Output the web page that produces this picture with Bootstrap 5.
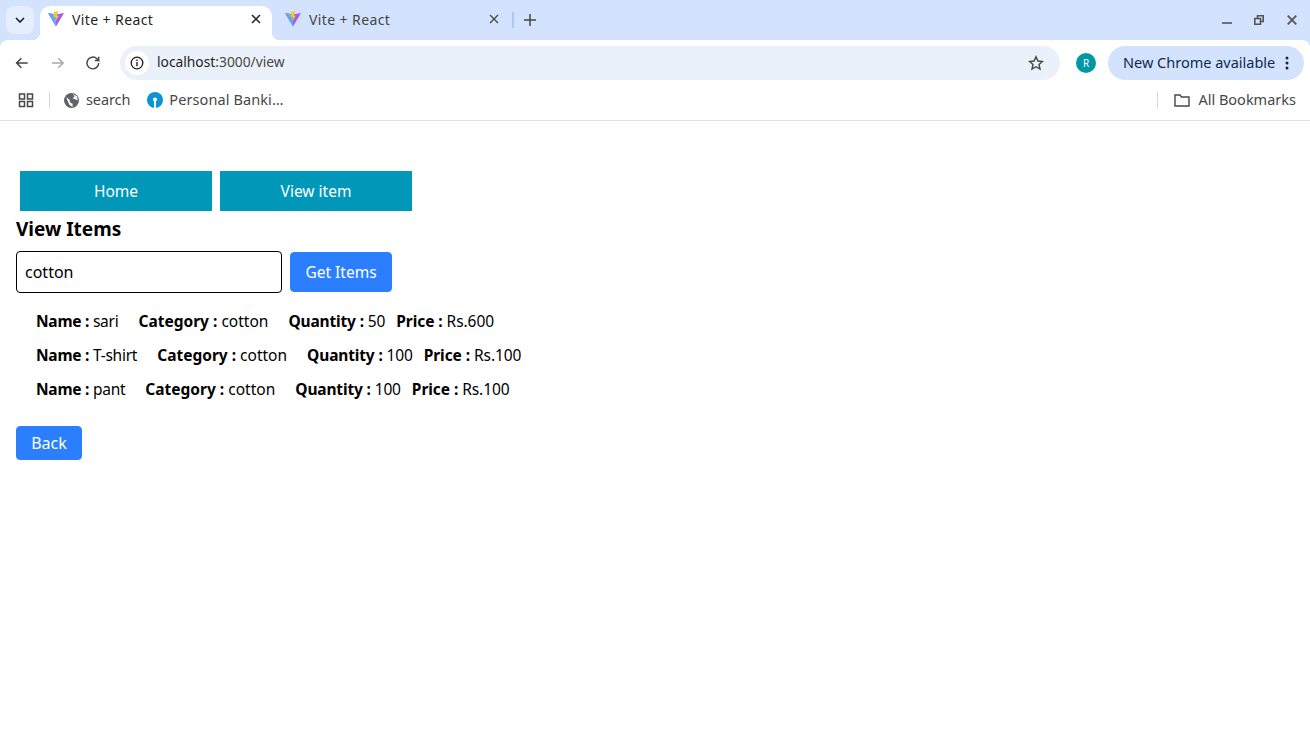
<!DOCTYPE html>
<html lang="en"><head><meta charset="utf-8"><title>Vite + React</title>
<link rel="stylesheet" href="https://cdn.jsdelivr.net/npm/bootstrap@5.3.0/dist/css/bootstrap.min.css">
<style>
html,body{height:741px;overflow:hidden}
body{font-family:"Noto Sans","Open Sans",sans-serif;color:#000;background:#fff}
.tabstrip{height:40px;background:#d3e3fd;color:#1f1f1f;font-size:14px;letter-spacing:.4px}
.tab-menu{width:28px;height:28px;margin:6px 6px;background:#e5eefd;border-radius:8px}
.tabx{width:232px;height:34px;margin-top:6px;padding:0 11px 8px 8px;gap:8px}
.tab-on{background:#fff;border-radius:10px 10px 0 0;position:relative}
.tab-on::before,.tab-on::after{content:"";position:absolute;bottom:0;width:8px;height:8px}
.tab-on::before{left:-8px;background:radial-gradient(circle at 0 0,#d3e3fd 8px,#fff 8.500px)}
.tab-on::after{right:-8px;background:radial-gradient(circle at 100% 0,#d3e3fd 8px,#fff 8.500px)}
.tab-off{color:#444746;width:240px;padding-left:13px;padding-right:13px}
.tab-name{flex:1 1 auto;white-space:nowrap}
.tab-sep{width:1.500px;height:16px;background:#a8c7fa;margin:12px 10px 0 0}
.plus-ic{margin-top:8px}
.winbtns{gap:22px;margin-right:13px;height:40px}
.win-r{margin-right:1px}
.toolbar-wrap{background:#d3e3fd}
.toolbar{height:40px;background:#fff;border-radius:8px 8px 0 0;padding:6px 6px 0 14px}
.navicons{gap:20px;width:87px}
.omni{height:34px;width:940px;background:#ebf1fa;border-radius:17px;margin-left:19px;padding:0 16px 0 5px;font-size:13.800px;color:#1f1f1f}
.omni-i{width:24px;height:24px;background:#fff;border-radius:50%;margin-right:8px}
.omni-url{flex:1 1 auto;padding-bottom:2px}
.omni-url span{color:#474747}
.avatar{width:20px;height:20px;border-radius:50%;background:#0097a7;color:#fff;font-size:10px;margin:0 12px 0 16px}
.chip{height:34px;width:196px;background:#d3e3fd;border-radius:17px;font-size:14.500px;color:#0f2a52;padding:0 15px 0 15px;white-space:nowrap}
.bookbar{height:41px;background:#fff;border-bottom:1px solid #e0e0e0;font-size:14.500px;color:#474747;padding:0 14px 0 18px;white-space:nowrap}
.bk-sep{width:1px;height:16px;background:#c7d9f7}
.bk-sep1{margin-left:15px}
.bk-globe{margin-left:14px}
.bk-search{margin-left:7px;letter-spacing:-.1px}
.bk-sbi{margin-left:17px}
.bk-long{margin-left:6px;letter-spacing:.1px}
.viewpage{padding:50px 16px 0}
.navlink-x{width:192px;height:40px;background:#0097b9;color:#fff;border:0;border-radius:0;padding:1px 0 0;font-size:15.500px}
.navlink-x:hover{background:#0097b9;color:#fff}
.navrow{margin-left:4px;gap:8px}
.view-h{font-size:19px;font-weight:700;line-height:24px;margin:6px 0 10px}
.search-in{width:266px;height:42px;border:1px solid #000;border-radius:4px;padding:0 8px;font-size:16px;color:#000}
.search-in:focus{border-color:#000;box-shadow:none}
.btn-x{background:#2b7fff;border-color:#2b7fff;color:#fff;border-radius:4px}
.getbtn{width:102px;height:40px;padding:1px 0 0;margin-left:8px;font-size:15.500px;white-space:nowrap}
.itemlist{margin:11px 0 0;padding:0 0 0 20px;list-style:none}
.itemlist li{height:34px;line-height:34px;font-size:15.500px;white-space:nowrap}
.itemlist b{font-weight:700}
.fld{display:inline-block}
.fld-name{letter-spacing:-.25px}
.fld-gap{margin-left:16px}
.fld-qty{letter-spacing:-.15px}
.fld-price{margin-left:7px;letter-spacing:-.07px}
.backbtn{width:66px;height:34px;padding:0;margin-top:20px;font-size:16px}
</style></head>
<body>
<div class="tabstrip d-flex align-items-start">
  <div class="tab-menu d-flex align-items-center justify-content-center flex-shrink-0">
    <svg width="10" height="6" viewBox="0 0 10 6"><path d="M1 1l4 4 4-4" fill="none" stroke="#1f1f1f" stroke-width="1.600"/></svg>
  </div>
  <div class="tabx tab-on d-flex align-items-center flex-shrink-0">
    <svg width="16" height="16" viewBox="0 0 16 16"><path d="M0 2l8 1.400L16 2 8 15.500z" fill="#a259ff"/><path d="M0 2l8 13.500V3.400z" fill="#58a8ff"/><path d="M6 1l4-1-1 5 2-.5L7 11l1-5-2.300.500z" fill="#ffc517"/></svg>
    <span class="tab-name">Vite + React</span>
    <svg width="10" height="10" viewBox="0 0 10 10"><path d="M1 1l8 8M9 1l-8 8" stroke="#1f1f1f" stroke-width="1.500"/></svg>
  </div>
  <div class="tabx tab-off d-flex align-items-center flex-shrink-0">
    <svg width="16" height="16" viewBox="0 0 16 16"><path d="M0 2l8 1.400L16 2 8 15.500z" fill="#a259ff"/><path d="M0 2l8 13.500V3.400z" fill="#58a8ff"/><path d="M6 1l4-1-1 5 2-.5L7 11l1-5-2.300.500z" fill="#ffc517"/></svg>
    <span class="tab-name">Vite + React</span>
    <svg width="10" height="10" viewBox="0 0 10 10"><path d="M1 1l8 8M9 1l-8 8" stroke="#444746" stroke-width="1.300"/></svg>
  </div>
  <div class="tab-sep flex-shrink-0"></div>
  <svg class="plus-ic flex-shrink-0" width="12" height="24" viewBox="0 0 12 24"><path d="M6 6v12M0 12h12" stroke="#444746" stroke-width="1.500"/></svg>
  <div class="winbtns ms-auto d-flex align-items-center">
    <svg width="10" height="10" viewBox="0 0 10 10"><path d="M0 8h10" stroke="#555" stroke-width="1.600"/></svg>
    <svg class="win-r" width="10" height="10" viewBox="0 0 10 10"><path d="M.8 3.500h5.700v5.700H.8zM3.500 3.500V.8h5.700v5.700H6.500" fill="none" stroke="#555" stroke-width="1.600"/></svg>
    <svg width="10" height="10" viewBox="0 0 10 10"><path d="M.7.700l8.600 8.600M9.300.700L.7 9.300" stroke="#555" stroke-width="1.800"/></svg>
  </div>
</div>
<div class="toolbar-wrap">
<div class="toolbar d-flex align-items-center">
  <div class="navicons d-flex align-items-center flex-shrink-0">
    <svg width="16" height="16" viewBox="0 0 16 16"><path d="M14 8H3M7.500 3.200L2.700 8l4.800 4.800" fill="none" stroke="#444746" stroke-width="1.600"/></svg>
    <svg width="16" height="16" viewBox="0 0 16 16"><path d="M2 8h11M8.500 3.200L13.300 8l-4.800 4.800" fill="none" stroke="#a9abac" stroke-width="1.600"/></svg>
    <svg width="16" height="16" viewBox="0 0 16 16"><path d="M14 8a6 6 0 1 1-1.800-4.300L14 5.500V1.500M14 5.500h-4" fill="none" stroke="#444746" stroke-width="1.500"/></svg>
  </div>
  <div class="omni d-flex align-items-center flex-shrink-0">
    <div class="omni-i d-flex align-items-center justify-content-center flex-shrink-0">
      <svg width="14" height="14" viewBox="0 0 14 14"><circle cx="7" cy="7" r="5.800" fill="none" stroke="#1f1f1f" stroke-width="1.300"/><path d="M7 6v4.200M7 3.500v1.400" stroke="#1f1f1f" stroke-width="1.400"/></svg>
    </div>
    <div class="omni-url">localhost<span>:3000/view</span></div>
    <svg width="16" height="16" viewBox="0 0 16 16"><path d="M8 1.800l1.900 4.200 4.500.5-3.400 3 1 4.500L8 11.700 4 14l1-4.500-3.400-3 4.500-.5z" fill="none" stroke="#444746" stroke-width="1.400"/></svg>
  </div>
  <div class="avatar d-flex align-items-center justify-content-center flex-shrink-0">R</div>
  <div class="chip d-flex align-items-center justify-content-between flex-shrink-0">
    <span>New Chrome available</span>
    <svg width="4" height="14" viewBox="0 0 4 14"><circle cx="2" cy="2" r="1.500" fill="#0f2a52"/><circle cx="2" cy="7" r="1.500" fill="#0f2a52"/><circle cx="2" cy="12" r="1.500" fill="#0f2a52"/></svg>
  </div>
</div>
</div>
<div class="bookbar d-flex align-items-center">
  <svg class="flex-shrink-0" width="16" height="16" viewBox="0 0 16 16"><path d="M1.500 2h5v5h-5zM9.500 2h5v5h-5zM1.500 9.500h5v5h-5zM9.500 9.500h5v5h-5z" fill="none" stroke="#474747" stroke-width="1.500"/></svg>
  <div class="bk-sep bk-sep1"></div>
  <svg class="bk-globe" width="15" height="15" viewBox="0 0 14 14"><circle cx="7" cy="7" r="7" fill="#5f6368"/><path d="M2 4l3 2 1 3 2 1v3l-3-2zM8 1l2 2-2 2 3 1 2 1-1-4z" fill="#fff"/></svg>
  <span class="bk-search">search</span>
  <svg class="bk-sbi" width="16" height="16" viewBox="0 0 16 16"><circle cx="8" cy="8" r="8" fill="#0a94d6"/><circle cx="8" cy="7.500" r="2" fill="#fff"/><path d="M7 8h2v8H7z" fill="#fff"/></svg>
  <span class="bk-long">Personal Banki…</span>
  <div class="bk-sep ms-auto"></div>
  <svg class="ms-3" width="16" height="14" viewBox="0 0 16 14"><path d="M1 2h5l1.500 2H15v9H1z" fill="none" stroke="#474747" stroke-width="1.400"/></svg>
  <span class="ms-2">All Bookmarks</span>
</div>
<main class="viewpage">
  <nav class="navrow d-flex">
    <a class="btn navlink-x d-flex align-items-center justify-content-center" href="#">Home</a>
    <a class="btn navlink-x d-flex align-items-center justify-content-center" href="#">View item</a>
  </nav>
  <h1 class="view-h">View Items</h1>
  <div class="d-flex align-items-center">
    <input class="form-control search-in" type="text" value="cotton">
    <button class="btn btn-x getbtn" type="button">Get Items</button>
  </div>
  <ul class="itemlist">
    <li><span class="fld-name"><b>Name :</b> sari</span> <span class="fld fld-gap"><b>Category :</b> cotton</span> <span class="fld fld-gap fld-qty"><b>Quantity :</b> 50</span> <span class="fld fld-price"><b>Price :</b> Rs.600</span></li>
    <li><span class="fld-name"><b>Name :</b> T-shirt</span> <span class="fld fld-gap"><b>Category :</b> cotton</span> <span class="fld fld-gap fld-qty"><b>Quantity :</b> 100</span> <span class="fld fld-price"><b>Price :</b> Rs.100</span></li>
    <li><span class="fld-name"><b>Name :</b> pant</span> <span class="fld fld-gap"><b>Category :</b> cotton</span> <span class="fld fld-gap fld-qty"><b>Quantity :</b> 100</span> <span class="fld fld-price"><b>Price :</b> Rs.100</span></li>
  </ul>
  <button class="btn btn-x backbtn" type="button">Back</button>
</main>
</body></html>
